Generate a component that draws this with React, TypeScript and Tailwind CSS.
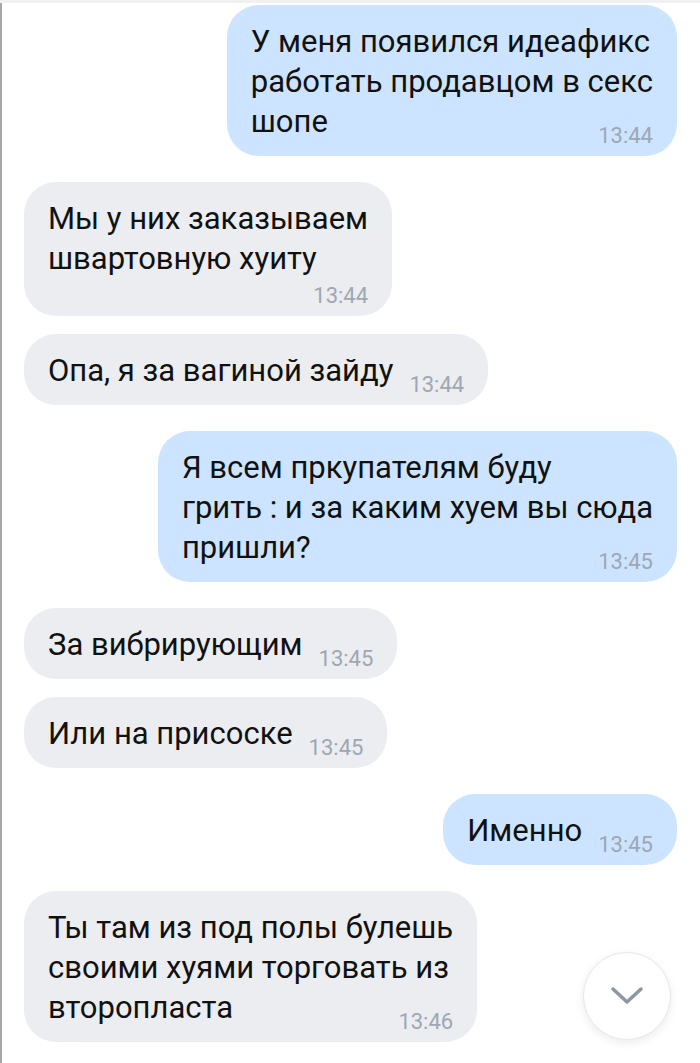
import { Fragment } from 'react';

type Msg = {
  out: boolean;
  lines: string[];
  time: string;
  timeBelow?: boolean;
};

const messages: Msg[] = [
  { out: true, lines: ['У меня появился идеафикс', 'работать продавцом в секс', 'шопе'], time: '13:44' },
  { out: false, lines: ['Мы у них заказываем', 'швартовную хуиту'], time: '13:44', timeBelow: true },
  { out: false, lines: ['Опа, я за вагиной зайду'], time: '13:44' },
  { out: true, lines: ['Я всем пркупателям буду', 'грить : и за каким хуем вы сюда', 'пришли?'], time: '13:45' },
  { out: false, lines: ['За вибрирующим'], time: '13:45' },
  { out: false, lines: ['Или на присоске'], time: '13:45' },
  { out: true, lines: ['Именно'], time: '13:45' },
  { out: false, lines: ['Ты там из под полы булешь', 'своими хуями торговать из', 'второпласта'], time: '13:46' },
];

function Bubble({ msg }: { msg: Msg }) {
  const last = msg.lines.length - 1;
  return (
    <div
      className={`flow-root w-fit whitespace-nowrap rounded-[32px] px-6 pt-[17px] pb-[9px] text-[31px] leading-[40px] text-[#111] ${
        msg.out ? 'self-end bg-[#cce4ff]' : 'self-start bg-[#ebedf0]'
      }`}
    >
      {msg.lines.map((line, i) => (
        <Fragment key={i}>
          {i > 0 && <br />}
          {i === last && !msg.timeBelow && (
            <span className="float-right ml-4 mt-[23px] text-[22px] leading-[22px] text-[#9ea7b2]">{msg.time}</span>
          )}
          {line}
        </Fragment>
      ))}
      {msg.timeBelow && (
        <div className="mt-[6px] text-right text-[22px] leading-[22px] text-[#9ea7b2]">{msg.time}</div>
      )}
    </div>
  );
}

export default function App() {
  return (
    <div className="relative h-[1063px] w-[700px] overflow-hidden bg-white font-['Roboto','Noto_Sans',sans-serif]">
      <div className="h-[3px] bg-[#f1f1f1]" />
      <div className="flex h-[1060px] flex-col border-l-2 border-[#a7a7a7] pt-[2px] pl-[22px] pr-[23px]">
        {messages.map((msg, i) => {
          const prev = messages[i - 1];
          const gap = !prev ? '' : prev.out === msg.out ? 'mt-[18px]' : 'mt-[26px]';
          return (
            <div key={i} className={`flex flex-col ${gap}`}>
              <Bubble msg={msg} />
            </div>
          );
        })}
      </div>

      <button
        aria-label="Scroll down"
        className="absolute right-[29px] bottom-[23px] flex h-[88px] w-[88px] items-center justify-center rounded-full border border-[#e6e7e8] bg-white shadow-[0_3px_10px_rgba(0,0,0,0.08)]"
        type="button"
      >
        <svg width="34" height="20" viewBox="0 0 34 20" fill="none">
          <path d="M3 3 L17 16 L31 3" stroke="#8d97a2" strokeWidth="3.5" strokeLinecap="round" strokeLinejoin="round" />
        </svg>
      </button>
    </div>
  );
}
